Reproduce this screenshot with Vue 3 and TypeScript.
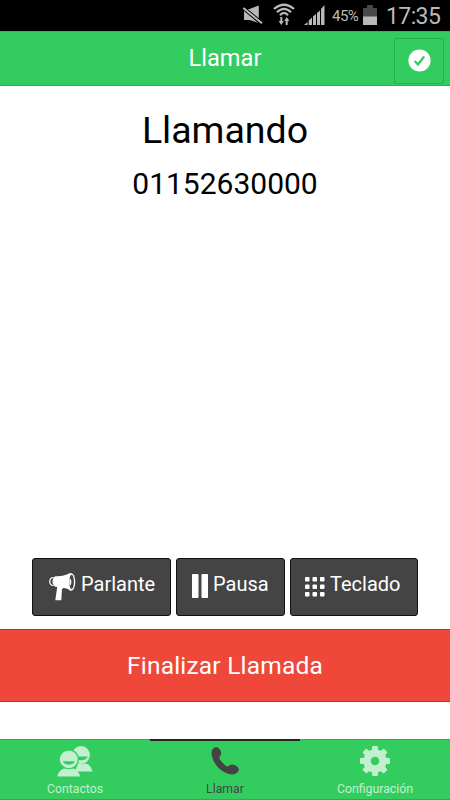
<script setup lang="ts">
import { ref } from 'vue'

type Tab = 'contactos' | 'llamar' | 'configuracion'

const phoneNumber = '01152630000'
const activeTab = ref<Tab>('llamar')
const tabs: { id: Tab; label: string }[] = [
  { id: 'contactos', label: 'Contactos' },
  { id: 'llamar', label: 'Llamar' },
  { id: 'configuracion', label: 'Configuración' },
]
const keypadDots = [0, 7.5, 15]
const gearAngles = [0, 45, 90, 135]
</script>

<template>
  <div class="screen">
    <div class="status">
      <svg class="mute" width="20" height="20" viewBox="0 0 20 20">
        <path d="M1 3h5.500L15.800-.5V17L6.500 14H1z" fill="#b9b9b9" />
        <path d="M-1 .8L19 17.500" stroke="#000" stroke-width="4" />
        <path d="M.3 2L19 17.300" stroke="#b9b9b9" stroke-width="2" />
      </svg>
      <svg class="wifi" width="22" height="24" viewBox="0 0 22 24">
        <g fill="none" stroke="#b9b9b9" stroke-width="2.200">
          <path d="M1 6Q11-2.500 21 6" />
          <path d="M4 9.300Q11 2.500 18 9.300" />
          <path d="M7 12.300Q11 7.500 15 12.300" />
        </g>
        <path d="M7.300 14h2v4h1.500l-2.500 4-2.700-4h1.700zM12.700 22h2v-4h1.700l-2.700-4-2.500 4h1.500z" fill="#b9b9b9" />
      </svg>
      <svg class="signal" width="21" height="20" viewBox="0 0 21 20" fill="#b9b9b9">
        <path d="M0 20l3.500-3v3zM4.700 15.500l3.300-3V20H4.700zM9 11.500L12 9v11H9zM13 8l3-2.500V20h-3zM17 4l3.500-4v20H17z" />
      </svg>
      <span class="percent">45%</span>
      <svg class="battery" width="14" height="20" viewBox="0 0 14 20">
        <path d="M4 0h6v3h4v9H0V3h4z" fill="#484848" />
        <path d="M0 11.500h14V20H0z" fill="#b9b9b9" />
      </svg>
      <span class="clock">17:35</span>
    </div>

    <header class="header">
      <h1 class="title">Llamar</h1>
      <button class="confirm" type="button" aria-label="Confirmar">
        <svg width="23" height="23" viewBox="0 0 23 23">
          <circle cx="11.500" cy="11.500" r="11.100" fill="#fff" />
          <path d="M6.700 12l3.300 3.500 6.200-8" fill="none" stroke="#33cd5f" stroke-width="2.300" />
        </svg>
      </button>
    </header>

    <main class="content">
      <h2 class="state">Llamando</h2>
      <p class="number">{{ phoneNumber }}</p>
      <div class="actions">
        <button class="action speaker" type="button">
          <svg width="27" height="28" viewBox="0 0 27 28">
            <path d="M4.500 4.500C-.5 4-.5 13 4.500 12.500" fill="none" stroke="#fff" stroke-width="1.200" />
            <path d="M6.500 3.300C11 3.600 16 3 21 .1L22 17.700c-2.500-1.500-5-2.700-7.500-2.700l-1.500 1L12.300 27.300H6.300L8.200 14l-1.700-.3C2.500 12.700 2.500 4.300 6.500 3.300z" fill="#fff" />
            <ellipse cx="22" cy="8.900" rx="4.300" ry="8.900" fill="#fff" />
            <ellipse cx="22.600" cy="8.900" rx="2.300" ry="7.200" fill="#444" />
            <path d="M20.500 5.400c2.500.3 2.500 6.700 0 7z" fill="#fff" />
          </svg>
          <span>Parlante</span>
        </button>
        <button class="action pause" type="button">
          <svg width="16" height="24" viewBox="0 0 16 24" fill="#fff">
            <rect width="6.500" height="24" rx=".8" />
            <rect x="9.500" width="6.500" height="24" rx=".8" />
          </svg>
          <span>Pausa</span>
        </button>
        <button class="action keypad" type="button">
          <svg width="20" height="20" viewBox="0 0 20 20" fill="#fff">
            <template v-for="y in keypadDots" :key="y">
              <rect v-for="x in keypadDots" :key="x" :x="x" :y="y" width="4.500" height="4.500" rx=".8" />
            </template>
          </svg>
          <span>Teclado</span>
        </button>
      </div>
      <button class="hangup" type="button">Finalizar Llamada</button>
    </main>

    <nav class="tabs">
      <button
        v-for="tab in tabs"
        :key="tab.id"
        class="tab"
        :class="{ active: activeTab === tab.id }"
        type="button"
        @click="activeTab = tab.id"
      >
        <svg v-if="tab.id === 'contactos'" width="36" height="32" viewBox="0 0 36 32">
          <circle cx="24" cy="9" r="8.900" fill="#c2f0cf" />
          <path d="M18 10.500h12.500c-.7 5-11.800 5-12.500 0z" fill="#33cd5f" />
          <path d="M18 25.500l3-8q4 1.500 7 0c4 .5 6.500 3.500 7.500 8z" fill="#c2f0cf" />
          <circle cx="11.800" cy="13.300" r="10.200" fill="#33cd5f" />
          <path d="M-.5 32C1 19.500 22 19.500 25 32z" fill="#33cd5f" />
          <circle cx="11.800" cy="13.300" r="8.900" fill="#c2f0cf" />
          <path d="M6 15.200h11.600c-.7 4.600-10.900 4.600-11.600 0z" fill="#33cd5f" />
          <path d="M.3 30.500c1.400-5.500 4.500-7.500 7.200-8q4.300 1.300 8.600 0c2.700.5 5.600 2.500 7 8z" fill="#c2f0cf" />
        </svg>
        <svg v-else-if="tab.id === 'llamar'" width="28" height="28" viewBox="0 0 28 28">
          <path d="M3.500.6C5.400-.2 7 .2 8.400 1.900c1.700 2.100 2.400 4.300 1.300 6.100C8.800 9.500 7.900 10 8.800 12c1.200 2.600 4 5.400 6.700 7.200 1.100.7 1.700-.2 3.100-1 2.200-1.200 5-.6 7.300 1.300 2.400 2 2.300 4.100.4 6-2.200 2.200-5.600 2.500-9.300 1.200C8.600 23.700 2.700 16.800.9 9 .1 5.400.7 2 3.500.6z" fill="#444" />
        </svg>
        <svg v-else width="30" height="30" viewBox="-15 -15 30 30">
          <circle r="11.600" fill="#c2f0cf" />
          <path
            v-for="angle in gearAngles"
            :key="angle"
            d="M-2.700-15h5.400l.6 5v20l-.6 5h-5.400l-.6-5v-20z"
            :transform="`rotate(${angle})`"
            fill="#c2f0cf"
          />
          <circle r="4.300" fill="#33cd5f" />
        </svg>
        <span>{{ tab.label }}</span>
      </button>
    </nav>
  </div>
</template>

<style>
body {
  margin: 0;
  background: #fff;
}
</style>

<style scoped>
.screen {
  display: flex;
  flex-direction: column;
  width: 450px;
  height: 800px;
  overflow: hidden;
  background: #fff;
  font-family: Roboto, sans-serif;
  color: #000;
}
.screen * {
  box-sizing: border-box;
}
svg {
  display: block;
  flex: none;
  overflow: visible;
}
button {
  margin: 0;
  padding: 0;
  font-family: inherit;
  font-weight: 400;
  cursor: pointer;
}
.status {
  display: flex;
  align-items: flex-start;
  flex: none;
  height: 31px;
  padding-left: 243px;
  background: #000;
  color: #b9b9b9;
}
.mute {
  margin-top: 6px;
}
.wifi {
  margin: 3px 0 0 10px;
}
.signal {
  margin: 5px 0 0 9px;
}
.percent {
  width: 27px;
  margin: 7px 0 0 7px;
  font-size: 15px;
  line-height: 18px;
  letter-spacing: -0.5px;
}
.battery {
  margin: 5px 0 0 4px;
}
.clock {
  margin: 4px 0 0 9px;
  font-size: 23px;
  line-height: 26px;
  letter-spacing: -0.6px;
  white-space: nowrap;
}
.header {
  display: grid;
  grid-template-columns: 56px 1fr 56px;
  flex: none;
  height: 55px;
  border-bottom: 1px solid #16bd47;
  border-top: 1px solid #28b84f;
  background: #33cd5f;
}
.title {
  grid-column: 2;
  margin: 0;
  font-size: 23.6px;
  font-weight: 400;
  line-height: 53px;
  text-align: center;
  color: #fff;
}
.confirm {
  display: grid;
  place-items: center;
  width: 50px;
  height: 46px;
  margin-top: 6px;
  border: 1px solid #28ad4f;
  border-radius: 2px;
  background: #33cd5f;
}
.confirm svg {
  margin-top: -1px;
}
.content {
  display: flex;
  flex-direction: column;
  flex: 1;
}
.state {
  margin: 21px 0 0;
  font-size: 37.5px;
  font-weight: 400;
  line-height: 46px;
  text-align: center;
}
.number {
  margin: 13px 0 0;
  font-size: 30px;
  line-height: 36px;
  text-align: center;
}
.actions {
  display: flex;
  justify-content: center;
  gap: 5px;
  margin-top: auto;
}
.action {
  display: flex;
  height: 58px;
  border: 1px solid #111;
  border-radius: 3px;
  background: #444;
  color: #fff;
  font-size: 20px;
  line-height: 51px;
  white-space: nowrap;
}
.speaker {
  width: 139px;
  padding-left: 16px;
  gap: 5px;
}
.speaker svg {
  margin-top: 14px;
}
.pause {
  width: 109px;
  padding-left: 15px;
  gap: 5px;
}
.pause svg {
  margin-top: 15px;
}
.keypad {
  width: 128px;
  padding-left: 14px;
  gap: 5px;
}
.keypad svg {
  margin-top: 18px;
}
.hangup {
  flex: none;
  height: 73px;
  margin: 13px 0 37px;
  border: solid #e42112;
  border-width: 1px 0;
  background: #ef473a;
  color: #fff;
  font-size: 24.5px;
  letter-spacing: 0.2px;
  line-height: 71px;
}
.tabs {
  display: grid;
  grid-template-columns: repeat(3, 1fr);
  flex: none;
  height: 61px;
  border-bottom: 1px solid #28ad4f;
  background: #33cd5f;
}
.tab {
  display: flex;
  flex-direction: column;
  align-items: center;
  justify-content: space-between;
  border: 0;
  border-top: 1px solid #16bd47;
  padding: 6px 0 2px;
  background: none;
  color: #c2f0cf;
  font-size: 12.3px;
  line-height: 16px;
}
.tab.active {
  padding-top: 6px;
  border-top: 2px solid #222;
  color: #444;
}
</style>
